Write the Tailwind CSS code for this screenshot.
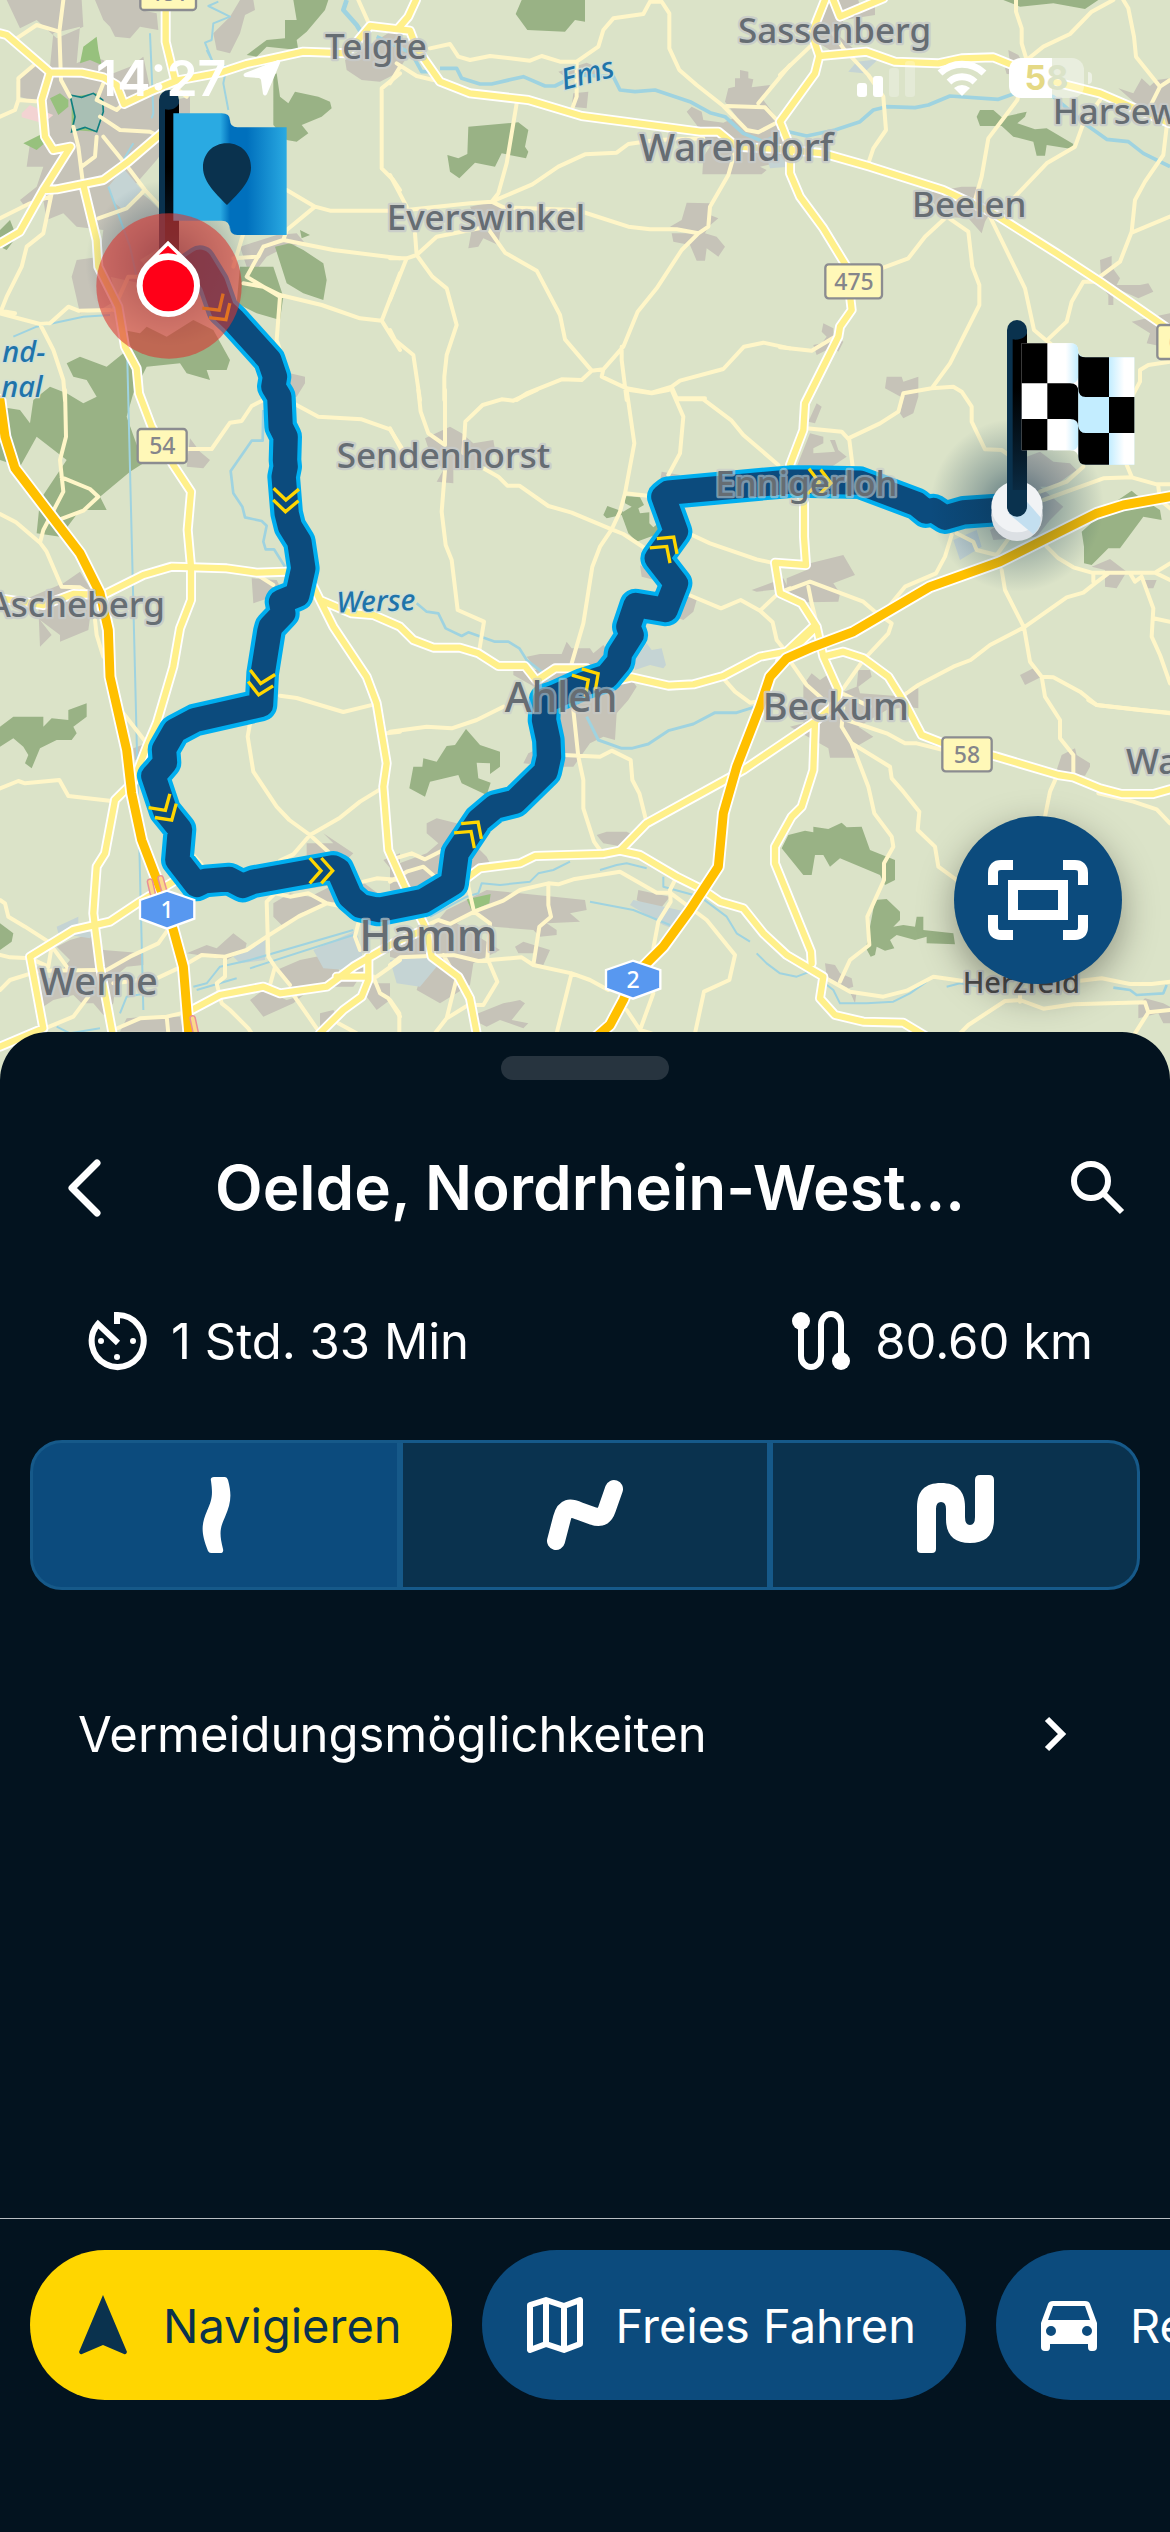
<!DOCTYPE html>
<html lang="de">
<head>
<meta charset="utf-8">
<meta name="viewport" content="width=device-width, initial-scale=1">
<title>Route nach Oelde</title>
<script src="https://cdn.jsdelivr.net/npm/@tailwindcss/browser@4"></script>
</head>
<body class="bg-[#03131f]">
<main class="flex min-h-screen flex-col overflow-hidden bg-[#03131f] font-['Inter',sans-serif] text-white">

<section class="relative" aria-label="Karte">
<svg class="block h-auto w-full" viewBox="0 0 3510 3240" role="img" aria-label="Route von Münster nach Oelde">
<defs>
  <g id="minor">
    <path d="M190 0L178 95L183 240L210 290M50 115L110 75L178 95M150 215L108 190L55 235V300L125 305M55 300L45 330L0 350M250 560L235 440L220 380M245 500L285 470L290 410M300 350L360 390L450 395L480 410M310 410L350 460L390 510L435 570L500 640M295 655L380 625L435 570M0 655L90 610L150 590M155 580L130 700L80 740L65 800L20 890L0 940L120 972L150 970L205 920L235 932L330 930M0 932L45 940M120 972L160 1050L190 1140L195 1200M340 930L385 830H420M510 250L560 290M310 250L290 300L350 330L372 310M1075 0L1110 78M1200 220L1145 265V505L1180 540L1200 570M860 570L945 620L860 690L850 720L790 740L740 830L840 890L830 1020L850 1080M945 620L990 632H1170M850 720L1000 750L1200 775M790 740L775 770L700 775M730 850L790 860L840 885L965 915L1080 955L1145 962L1200 1050M1145 962L1200 820M730 700L700 800"/>
    <path transform="translate(1170)" d="M120 145L180 132L205 170L240 180L300 168L420 182L455 168L510 185H560L625 140L640 90L670 55L760 42L780 5L815 5L838 40V145L868 210L920 255L1000 318L1070 390L1105 397L1165 365L1125 322L1010 318M1105 310L1200 195M560 185V290L545 330M20 190L80 228L130 240M30 200L0 250M380 310L350 490L325 580L305 605L240 610L50 630M305 605L427 553L505 500L585 463L680 458L715 432L800 420L940 415M305 605L340 622L560 630L715 680L780 688H860L925 700L955 680L960 620L1015 525L1035 455M925 700L875 750L800 865L743 935L700 1040L640 1108L605 1112L525 1018L510 945L440 812L345 758L290 680M290 680L140 710L80 765L50 775H0M80 765L75 700M80 765L127 830L170 865L200 975L170 1065L163 1130V1200M50 775L0 900M0 525L50 620M0 990L15 1020L70 1065L90 1200M605 1112L575 1140L515 1138L410 1180L380 1200M640 1108L635 1130L710 1165L785 1178L845 1160L870 1142L1000 1107L1062 1040L1120 1028L1200 1045M695 1040V1080L710 1200M845 1160L860 1195H945"/>
    <path transform="translate(2340)" d="M0 225L90 140M160 100L190 145L265 225L310 290L318 390L280 445L265 490M708 0V35L725 85V130L740 180L790 140L870 102L935 35L1000 0M1030 0L1045 25L1062 110L1068 170L1140 260L1110 320M740 180L712 300L625 415L605 530L585 600M1140 260L1170 240M1160 380L1150 465L1095 545L1065 600L1055 695L1020 785L960 830M1170 650L1055 698M960 300L910 370L885 440L800 490L705 590M310 803L385 775L435 710L500 650L565 695L577 800L598 855V915L510 1090L455 1165L370 1180L355 1235L300 1270L205 1315M455 1165L520 1160L545 1175L575 1220V1265L615 1348L665 1350L700 1375M630 650L735 865L762 990L800 1022L860 965L875 905L910 845H965M0 1042L95 1052L165 1010M800 1022L835 1050M1170 1085L1105 1095L1080 1110V1145L1040 1220L1030 1370L1055 1430"/>
    <path transform="translate(0 1170)" d="M195 0L198 140L180 210L190 305L130 420L120 458L48 397L0 372M120 458L140 485L185 590L240 592L260 605M185 262L270 297L295 320L250 362L180 388M880 40L955 80L1085 88L1170 118L1215 190M565 177H635L690 98L725 93L755 48L795 28M285 690L290 735L310 800M370 970L440 1060M840 917L890 924L1030 966L1120 944M750 1000L743 1040L760 1145L830 1250L868 1290L930 1335L985 1385M1160 1030L1200 1025M1145 1195L1080 1235L1020 1283L930 1335L880 1393L840 1412M780 560L820 585"/>
    <path transform="translate(1170 1170)" d="M85 0L92 65L115 130L165 165V0M0 115L40 190M220 190L226 95L278 45L335 28L370 32L440 0M280 235L325 260L352 287H388L475 348L545 368L665 418L700 432L780 485M710 0L733 160L705 310L690 365L665 418L630 470L607 530L580 700L545 820M165 240L155 365L167 465L185 510L203 660L282 695L268 780M705 310L780 318M720 0L785 10L835 0M845 0L880 80L870 190L835 255M865 28H940L1025 92L1060 135L1165 225M900 432L960 460L1100 508L1155 520M890 612L993 655L1052 630L1110 662L1148 697L1160 750L1180 775M1110 662L1165 610L1200 595M1000 865L1035 905L1080 938L1130 930M0 1025L110 1010L185 1015L260 990L340 950M550 960L565 1100L580 1170V1255L612 1355L630 1380M520 1095L630 1100L665 1082L722 1110L727 1170L748 1210L768 1290"/>
    <path transform="translate(2340 1170)" d="M80 115L185 125L208 150L218 230M790 330L970 265L1055 262L1130 283H1170M780 305L860 275L910 230M530 430L580 455L590 480L650 495L690 440M515 435L495 500L468 550L375 590L330 645M10 605L90 575L250 635L285 665L335 700L325 730L250 810L190 895M85 590L95 640L110 700M665 540L675 600L732 712L750 815L785 860L795 920L840 990V1045L880 1095V1155M732 712L630 765L572 810L520 830L415 885L365 920M732 712L860 622L910 608L945 580L985 550M800 470L835 505L880 532L935 548H1060L1125 548L1170 520M940 550V575M1125 548L1170 570M1050 550L1065 575L1085 560L1120 655L1115 740L1140 795L1170 880M1120 685L1170 695M785 860L820 862L900 905L950 945L1080 960L1170 968M35 820L80 885L125 925L165 960M175 905L270 950M190 950L185 1010L215 1060L265 1190L283 1270L335 1340L340 1370L312 1420V1470L262 1580L268 1665L210 1710L180 1775M215 1060L330 1130L335 1165L370 1205L418 1265L413 1320L465 1370L475 1430L530 1470M200 990L320 1030L375 1060H410L490 1080M830 1160L810 1205L795 1280M955 1210L1060 1235L1130 1258L1170 1300M1135 290L1140 330L1170 355"/>
    <path transform="translate(0 2100)" d="M0 265L55 243L75 250L178 240L205 288L335 303M575 460L610 500M0 600L15 610L25 650L75 680L145 725L200 800M155 740L145 800L90 775L30 772L0 765M0 870L30 840L120 812L290 810M320 810L390 770L475 730L500 695M265 890L220 950L135 985M340 850L470 835L545 800L605 765L675 770L740 750L800 710L895 650L980 610L925 580L870 590L825 580L800 605L805 770L825 800L870 855M825 800L810 855M980 610L1030 620M340 990L420 955L500 950L565 935M500 950L505 1000M675 770V830L650 850L665 910L690 930L745 985L755 1000M870 870L950 985M1075 670L1065 710L1080 750M1090 545L1130 535L1200 540M1120 830L1140 880L1165 895L1200 950M1130 830L1200 780M1015 970L1070 1000"/>
    <path transform="translate(1170 2100)" d="M0 480L65 460L105 478L160 450M0 545L50 515L100 500L140 535M235 490V560L252 635L340 602L390 570L475 550L505 553L550 538L690 515L800 578H840L950 660L1035 765L1018 840L942 875L915 1000M475 550V615L483 650L448 680L430 795M252 635L180 672L145 660L100 680M252 635L300 670L292 775L322 845L280 915H235L170 955L135 1000M0 795L30 772L190 765L265 783L395 772L430 795L545 820L600 840L655 870M160 765L200 835L170 955M545 820L500 1000M855 540L840 570L842 605L805 665L790 745M710 930L750 990L785 1000M790 880L750 990M0 900L28 940V1000"/>
    <path transform="translate(2340 2100)" d="M925 0L950 15L1170 40M130 830L210 875L310 890L380 872L460 830L545 842M900 842L965 835L1050 852H1115L1170 845M540 1000L565 975L675 903L720 900L790 926L880 913L1095 907L1105 937L1065 1000M1105 937L1170 930M720 885V905"/>
  </g>
  <g id="major">
    <path d="M0 100L20 105L150 217L245 218L310 232L350 255L372 312L450 275L530 242L660 218L740 192L910 155L1040 160L1075 120L1110 78L1230 92L1250 145L1320 245L1410 280L1585 300L1745 348L2100 395H2155L2210 440L2340 447L2470 460L2610 500L2830 570L2980 640L3170 760L3300 845L3510 990M1195 85L1225 50L1248 0M150 217L125 300L135 410L160 450L212 440L130 570L60 695L0 730M130 570L170 568L310 540L385 485L490 395M497 0V125L525 240M250 555L290 720L295 800L355 920L375 1040L410 1105L417 1180L455 1280L520 1395L573 1475L563 1590L573 1700V1800L540 1885L520 2000L470 2170L440 2240L400 2345L345 2400L315 2560L290 2600L280 2740L300 2900L345 3140"/>
    <path transform="translate(2340)" d="M135 0L95 100L118 168L105 220L0 365L30 440V520L60 590L130 685L200 800L215 930L180 980L175 1010L75 1210L70 1290L30 1395L72 1510V1610L78 1695L-15 1688L0 1780L65 1810L110 1880L130 1970L175 2070L170 2110L105 2165L-110 2310L-400 2470L-480 2552M118 168L260 155L345 185L475 190L545 175L640 172L820 245L960 280L1170 370M160 0L180 50L310 -5M130 1970L190 1955L250 1975L325 2030L375 2110L425 2205L490 2230L650 2270L835 2325L880 2332L960 2365L1025 2382H1120L1170 2368M110 1880L0 1985M105 2165L100 2310L65 2420L35 2450L-15 2540V2590L93 2855L95 2890"/>
    <path transform="translate(0 1170)" d="M0 625L130 645L220 612L310 615L430 555L515 530L680 535L770 548L860 545M930 570L1000 710L1100 860L1130 940L1160 1120L1150 1190L1165 1380L1210 1480L1280 1620L1295 1700L1375 1760L1410 1825L1430 1930M960 630L1055 670L1120 675L1200 710L1240 750L1300 773H1380L1435 790L1495 828H1575L1610 872L1665 835H1760M1860 870L1895 862L2005 887L2080 883L2170 858L2280 800L2360 785L2440 710"/>
    <path transform="translate(0 2100)" d="M0 1040L130 985L105 850L90 770L220 690L330 665L420 605L520 545M575 930L660 885L790 860L840 880L980 860L1060 800L1180 730L1270 690M960 1000L1030 930L1085 890L1105 840V770M1010 830H1105M1400 535L1440 505L1560 490L1605 468L1810 462L1860 452L1920 465L2030 530L2110 570L2160 605L2230 625L2290 700L2360 765L2470 830L2460 895L2505 945L2590 965L2710 968L2780 1010"/>
  </g>
  <g id="motorway">
    <path d="M0 1200L15 1310L45 1405L240 1660L300 1780L325 1890L330 2030L380 2250L395 2380L425 2520L490 2690L520 2790L550 2900L568 3120"/>
    <path d="M3510 1490L3370 1515L3290 1540L3000 1685L2790 1760L2560 1895L2440 1940L2360 1975L2310 2030L2280 2120L2210 2300L2170 2440L2155 2600L2070 2730L1990 2840L1900 2930L1870 3000L1830 3075L1790 3110"/>
  </g>
  <path id="route" d="M520 840L600 785L640 850L668 930L700 960L808 1080L825 1130L820 1160L838 1190L842 1280L857 1310L855 1380L857 1400L851 1430L860 1540L870 1580L898 1625L910 1705L892 1785L843 1805L850 1840L812 1880L808 1895L788 2020L783 2115L585 2160L524 2192L492 2248L495 2288L472 2315L460 2328L495 2432L540 2488L532 2580L590 2655L615 2643L688 2637L728 2658L760 2645L1000 2602L1015 2610L1050 2690L1082 2718L1135 2730L1270 2703L1358 2650L1370 2560L1437 2460L1485 2420L1545 2405L1637 2315L1647 2270L1645 2220L1632 2160L1635 2100L1665 2090L1750 2052L1820 2030L1857 1985L1860 1960L1895 1905L1885 1880L1907 1815L1997 1830L2028 1750L1970 1675L2028 1595L1990 1490L2005 1478L2370 1445H2430L2580 1448L2750 1512L2778 1535L2800 1530L2835 1553L2890 1537L2990 1530"/>
  <g id="chevrons"><path d="M-52-38L-18 0L-52 38M-17-38L17 0L-17 38"/></g>
  <radialGradient id="shade"><stop offset="0" stop-color="#0a324e" stop-opacity=".65"/><stop offset=".45" stop-color="#0a324e" stop-opacity=".32"/><stop offset="1" stop-color="#0a324e" stop-opacity="0"/></radialGradient>
  <linearGradient id="fold"><stop offset="0" stop-color="#0070bd"/><stop offset=".3" stop-color="#0070bd"/><stop offset="1" stop-color="#2aaae2"/></linearGradient>
  <linearGradient id="edge"><stop offset="0" stop-color="#2aaae2"/><stop offset=".83" stop-color="#2aaae2"/><stop offset="1" stop-color="#0070bd"/></linearGradient>
  <linearGradient id="sheen"><stop offset="0" stop-color="#c3edff"/><stop offset=".6" stop-color="#fff"/></linearGradient>
  <linearGradient id="sheenEnd"><stop offset=".6" stop-color="#fff"/><stop offset="1" stop-color="#c3edff"/></linearGradient>
  <linearGradient id="pole" x1="0" y1="0" x2="0" y2="1"><stop offset="0"/><stop offset=".35" stop-color="#000"/><stop offset="1" stop-color="#0a2a42"/></linearGradient>
</defs>

<rect width="3510" height="3240" fill="#dbe3c8"/>

<!-- built-up areas -->
<g fill="#c6c3b8">
  <path d="M20 0L60 85L110 60L170 115L250 80L245 0ZM285 0L310 60L330 80L345 110L390 115L420 80L475 90L470 40L420 30V0ZM160 100L240 80L230 190L270 170L310 180L340 220L390 200L430 170L450 265L520 300L570 290V340L540 380L470 480L400 560L450 600L500 650V730L420 780L330 820L350 900L300 930L240 940L215 830L230 780L300 770L310 690L230 680L190 640L140 660L130 600L75 620L60 600L110 560L130 500L80 500L90 430L130 420L120 310L60 290L50 240L100 190L150 200ZM640 100L690 50L720 0H760L765 30L735 45L720 100L690 160L650 150ZM1035 180L1180 90L1240 140L1190 220L1140 245L1085 240L1040 210ZM720 740L830 705L890 700L915 730L850 745L800 770L765 815L740 800ZM870 1120L915 1130V1150L890 1190H870ZM330 770L400 760L440 800L420 850L330 830Z"/>
  <path transform="translate(1170)" d="M505 215L590 188L630 205L620 225L530 235ZM550 280L595 275L590 325L545 320ZM240 620L310 605L350 630L330 700L325 735L280 715L265 740L235 745L245 690L260 660ZM890 608L960 610V645L985 655L955 680L945 700L980 710L1005 740L985 770L950 745L945 782H920L900 735L850 725L845 700L925 700L840 680L875 660ZM1005 305L1015 265L1035 260L1035 235H1050V210L1075 215V235L1090 238L1085 262L1140 255L1120 300L1180 380L1200 480L1110 500L1130 510L1115 523H937L940 470L960 440L920 375L890 335L905 320L935 335L940 360L1000 368L1040 350Z"/>
  <path transform="translate(2340)" d="M100 120L150 0H235L240 20L285 15V45L190 60L180 110L225 150L150 150ZM685 150L715 165L735 200V225L680 222L675 205L690 190ZM1015 265L1060 280L1085 235L1110 258L1130 240L1170 235V385L1100 340ZM440 580L545 560H590V600L640 620L615 665L605 700L565 655L490 650ZM960 780L995 768V800L1020 835L1010 855H1080L1105 850L1120 875L1075 895L1020 870L1000 880V915H985V885L965 860ZM130 970L160 985V1005L190 1025L175 1055L160 1040L110 1065L100 1035L125 1030L140 1010L125 995ZM1055 965L1120 950L1170 940V1045L1100 1030L1110 1000ZM320 1130H365L370 1145L415 1130V1190L400 1240L370 1255L360 1240L370 1195L315 1165ZM110 1210L125 1220L105 1270L85 1265ZM90 1300L130 1310V1330L100 1345V1360L165 1355L150 1320H165L175 1350L200 1370L155 1400L120 1430L50 1400ZM740 1370L780 1355L820 1385L870 1390L890 1410L820 1460L780 1460L850 1520L810 1560L770 1610L640 1620L630 1590L720 1540ZM20 1735L80 1710L90 1690L190 1665L225 1725L160 1750L180 1780L175 1805L80 1807L20 1780ZM935 1700L990 1677L1040 1715L1010 1765L975 1760V1710ZM1085 1740H1130L1120 1765H1095ZM720 2025L760 2005L785 2030L735 2055ZM70 2055L95 2020L120 2040L150 2020L180 2080L230 2060L235 2010L270 2010L275 2030L235 2060L240 2080L380 2090V2070L415 2065V2125L380 2120L320 2130L235 2180L280 2210L220 2245L225 2273H150L145 2245L30 2180L70 2170ZM845 2265L885 2245L890 2265L930 2290V2300L915 2327L880 2322L830 2310ZM135 2890L165 2895L180 2920L215 2935L220 2960L190 2970L230 2975L225 3010L205 2965L140 2930ZM1075 3015L1095 2995L1150 3010L1170 3020V3070H1150L1135 3040L1075 3055Z"/>
  <path d="M570 1315L600 1355L630 1380L610 1405L560 1400ZM190 1750L240 1715L280 1780L265 1890L180 1925V1905L120 1860L155 1905L120 1940L115 1820L70 1800ZM755 1735L830 1740L850 1780L760 1810ZM400 2245L440 2230V2280L405 2280ZM210 2820L280 2800L310 2850L430 2860V2895L380 2900L350 2925L340 3010L310 3045L280 3010H245L220 2985L160 3000L130 3020L120 2940L170 2930L210 2880L170 2840ZM560 2860L620 2835L650 2845L700 2800L740 2830L735 2850L680 2880L630 2870ZM380 3055L440 3050H540L550 3095H360ZM750 3000L790 2970L860 3000L910 2985L880 3010L790 3050ZM920 2530L1000 2530L970 2500L1060 2560L1030 2590L1080 2640L1160 2700L1080 2700L1030 2650L900 2670L920 2620ZM820 2710L870 2680L930 2690L1010 2650L1020 2700L900 2740L850 2780L820 2750ZM830 2910L900 2880L1000 2860L1020 2920L1100 2900L1060 2960L870 2960ZM1150 2580L1200 2560V2640ZM960 3040L1000 3030L1020 3060L990 3090H960ZM1105 2950L1170 2950V3000L1130 3030L1100 2990Z"/>
  <path transform="translate(1170 1170)" d="M105 145L180 110L215 130L250 160L310 150L315 180L280 240L190 240V280L140 275L160 240L120 190ZM815 245L870 255L860 280L810 275ZM750 525L800 560L815 575L755 560ZM885 610L920 630L910 665L880 690L855 680ZM1085 600L1180 565L1195 595L1100 605ZM410 800L450 792H515L530 755L545 775H600L610 790L640 765L720 860L740 890L715 930L680 970L675 1050L640 1040L600 1060L550 1130H500L400 1120L415 1090L480 1060L450 900L370 855L370 840L440 840ZM110 1300L140 1285L200 1300L240 1350L290 1400L310 1440L240 1450L220 1500L110 1530L0 1500V1430L110 1390L145 1360L110 1330ZM620 1335L650 1325L710 1325L740 1340L700 1370L640 1360ZM170 1560L290 1500L390 1510L585 1530L590 1560L540 1570L570 1595L470 1600L500 1620V1635L450 1640L430 1620L310 1610L250 1570L200 1600L330 1680L250 1720L240 1785L150 1840L80 1800L100 1730L0 1700L0 1650L120 1620ZM375 1670L400 1655L480 1680L460 1725L430 1720L440 1690L385 1690ZM745 1500L790 1510L840 1520L800 1570L740 1530ZM265 1870L340 1840L390 1830L405 1840L365 1890L415 1900L400 1915L330 1890L290 1910L250 1890Z"/>
</g>

<!-- woodland -->
<g fill="#99b285">
  <path d="M880 0H985L975 30L920 95L890 120L895 150L800 140L770 170L740 165L800 120L855 115V60H890ZM820 225L830 220L840 290L865 310L885 275L955 290L990 305L995 325L965 350L905 375L925 400L890 425L860 420L820 375ZM825 740L870 730L910 750L970 790L980 840L970 900L910 880L860 850ZM720 800L820 800L830 830L850 890L840 960L770 940L710 910ZM900 690L930 705L905 715ZM200 1090L240 1070L320 1100L370 1060L370 990L420 1000L440 980L500 1010L580 960L640 990L690 1080L680 1110L620 1110L630 1140L560 1120L540 1090L440 1100L400 1180L380 1250L430 1390L390 1415L300 1490L320 1530L240 1530L180 1610L110 1600L120 1500L200 1380L110 1310L60 1400L0 1380V1220L60 1230L90 1270L100 1200L150 1160L200 1180L250 1210L290 1190L260 1140L220 1130ZM0 2180L40 2150H130V2180L155 2155L205 2160V2130L260 2110V2150L220 2180L230 2200L215 2220L170 2220L120 2245L95 2305L75 2290L85 2265L70 2240L40 2215L0 2240ZM0 2770L40 2800L35 2825L0 2850ZM30 660L50 710L20 750L0 740V690Z"/>
  <path transform="translate(1170)" d="M395 0H585V65L555 60L525 95L412 90L377 42ZM235 380L385 367L415 390L405 440L415 455L408 475L335 460L315 500L255 488L208 535L180 515L172 465L205 475L232 462Z"/>
  <path transform="translate(2340)" d="M670 0H955L915 27L820 10L720 20ZM600 330H640L665 352L740 335L735 350L712 370L765 388L800 385L880 432L875 447L800 435L795 467H770L760 425L700 410L665 378H600L590 350ZM905 1595L1000 1510L1055 1472L1070 1485L1140 1530L1145 1560L1090 1550L1020 1645L985 1645L935 1695L912 1690V1640ZM5 2545L25 2505L75 2492L100 2497V2480L145 2487L185 2468L200 2482L245 2480L270 2550L345 2580V2640L315 2655L300 2625L180 2575L150 2600L130 2565H105L95 2625H70ZM285 2700L320 2697L360 2735V2760L340 2780L370 2775L405 2780L410 2750H430V2790L520 2800L525 2833L440 2830V2810L405 2820L350 2805L330 2820L343 2845L315 2852L290 2840L285 2865L272 2870L258 2845Z"/>
  <path transform="translate(1170 1170)" d="M705 318L750 322L762 345L745 355L750 370L778 367V400L790 412L805 400L810 430L740 455L715 430L695 375L650 385L640 375L652 348L700 365L725 350L705 340ZM228 1017L270 1065L330 1085V1130L300 1152V1120L260 1118L265 1165L302 1178L290 1215L215 1180L205 1155L120 1175L105 1220L58 1195L70 1130H97L100 1105L140 1115L170 1068L195 1065Z"/>
</g>
<g fill="#97c17d">
  <path d="M250 140L290 110L295 150L305 195L270 180L240 190ZM150 295L180 280L205 300V320L175 345ZM70 430L130 400L145 420L110 450ZM215 290L290 280L310 330L290 395L215 390Z"/>
  <path transform="translate(1170 2100)" d="M230 598L302 582L298 610L245 632Z"/>
</g>
<path d="M65 340L90 315L120 330L160 345L130 370L65 352Z" fill="#f3d3d2"/>
<path d="M210 285L245 292L280 280L308 300L310 335L290 395L255 382L215 395L225 350Z" fill="#a9bfb4" stroke="#0f8080" stroke-width="5"/>

<!-- water -->
<g fill="#c5d4d4">
  <path d="M325 560L370 505L425 570L370 630L345 610ZM170 2780L235 2750V2780L280 2800L270 2815L175 2800ZM940 2850L1070 2790L1090 2880L1040 2910L970 2905ZM700 2870L795 2820V2880L720 2890ZM1170 2880L1290 2870L1310 2900L1260 2960L1190 2950ZM2300 470L2370 460V500L2310 505ZM2545 215L2570 185L2635 178L2590 220ZM1890 2715L1900 2700L2080 2740L2030 2790L1990 2775ZM1905 1980L1940 1930L1955 1950L1985 1945L1998 1995L1990 2005L1950 1995L1905 2010ZM2860 1620L2930 1590L2945 1640L2880 1680Z"/>
</g>
<g fill="none" stroke="#9fd3e0" stroke-width="11" stroke-linejoin="round">
  <path d="M1130 110L1235 160L1265 215H1310M1320 205H1370L1385 235L1440 252H1475L1570 230L1635 258H1665L1730 225L1840 230L1860 270L1905 275L1965 270L2070 305L2130 338L2175 350L2230 400L2290 425L2365 395L2420 408L2505 390L2580 365L2620 330L2660 320L2745 323L2785 315L2850 288L2995 298L3060 275L3160 290L3260 375L3320 418L3385 425L3430 460L3510 500"/>
  <path d="M1040 0L1030 30L1070 75L1110 140" stroke-width="14"/>
  <path d="M655 5L625 18L690 50L640 70L635 120L615 128L640 190L680 200L670 250L685 330M640 190L620 150M450 100L460 340L455 355" stroke-width="6"/>
  <path d="M325 560L390 740L410 830M400 430L340 530M40 1010L110 980L250 950L330 945" stroke-width="6"/>
  <path d="M790 1230L788 1322H755L692 1413L700 1480L727 1520L735 1552L785 1563L800 1577L790 1625L797 1648H822L855 1700M1250 1810L1280 1835L1315 1840L1337 1885L1385 1908L1405 1897L1485 1925H1525L1558 1945L1580 1980L1625 2015L1655 2050" stroke-width="8"/>
  <path d="M1760 2150L1795 2220L1865 2245H1895L1945 2232L2005 2192L2080 2172L2145 2138H2210L2260 2122" stroke-width="9"/>
  <path d="M170 3080L210 3100L300 3085M360 3040L380 2990L440 2980M580 2960L620 2950L640 2925L660 2900L750 2880L1060 2790M750 2905L1060 2805M590 2970L710 2935M1290 2750L1400 2690L1435 2680L1445 2650L1500 2655L1590 2645L1615 2620L1660 2610L1710 2585M1800 2610L1850 2595L1880 2590L1940 2605M1990 2630V2660L2100 2690L2180 2750L2210 2800L2250 2825M1770 2705L1900 2730L2010 2775M2270 2860L2300 2890L2340 2920L2390 2930L2430 2915L2500 2970L2520 3010L2600 3010L2680 3005L2730 2980L2780 2945M2840 2960L2880 2950L2940 2960M380 1000L430 3030" stroke-width="6"/>
  <path d="M3340 2963L3390 2970L3410 2985L3490 2980L3500 2955" stroke-width="8"/>
</g>

<!-- road network -->
<g fill="none" stroke-linejoin="round" stroke-linecap="round">
  <use href="#minor" stroke="#fff6c8" stroke-width="12"/>
  <use href="#major" stroke="#fff" stroke-width="30"/>
  <use href="#major" stroke="#fff08a" stroke-width="19"/>
  <use href="#motorway" stroke="#fff" stroke-width="38"/>
  <use href="#motorway" stroke="#ffc000" stroke-width="27"/>
  <path d="M458 2680L450 2645M492 2670L482 2635M592 3120L578 3055" stroke="#e88f98" stroke-width="20"/>
  <path d="M458 2680L450 2645M492 2670L482 2635M592 3120L578 3055" stroke="#fbd989" stroke-width="11"/>
  <use href="#route" stroke="#00aeef" stroke-width="98"/>
  <use href="#route" stroke="#0c4b7d" stroke-width="73"/>
</g>
<g fill="none" stroke="#ffd600" stroke-width="10">
  <use href="#chevrons" transform="translate(668 945) rotate(55)"/>
  <use href="#chevrons" transform="translate(857 1518) rotate(92)"/>
  <use href="#chevrons" transform="translate(779 2068) rotate(100)"/>
  <use href="#chevrons" transform="translate(506 2446) rotate(57)"/>
  <use href="#chevrons" transform="translate(981 2612)"/>
  <use href="#chevrons" transform="translate(1424 2480) rotate(-53)"/>
  <use href="#chevrons" transform="translate(1780 2030) rotate(-32)"/>
  <use href="#chevrons" transform="translate(2011 1625) rotate(-53)"/>
  <use href="#chevrons" transform="translate(2476 1448) rotate(4)"/>
</g>

<!-- road numbers -->
<g fill="#fff8b8" stroke="#8b8c90" stroke-width="7">
  <rect x="421" y="-72" width="167" height="102" rx="10"/>
  <rect x="2476" y="793" width="170" height="102" rx="10"/>
  <rect x="3472" y="975" width="150" height="102" rx="10"/>
  <rect x="413" y="1287" width="147" height="102" rx="10"/>
  <rect x="2827" y="2212" width="148" height="102" rx="10"/>
</g>
<g fill="#5898f0" stroke="#fff" stroke-width="7">
  <path d="M420 2700L501 2672L583 2700V2756L501 2786L420 2756Z"/>
  <path d="M1818 2910L1899 2882L1981 2910V2966L1899 2996L1818 2966Z"/>
</g>
<g font-family="'Noto Sans',sans-serif" font-size="69" font-weight="500" fill="#85868b" text-anchor="middle">
  <text x="505" y="4">481</text><text x="2562" y="869">475</text><text x="3546" y="1051">64</text>
  <text x="487" y="1362">54</text><text x="2901" y="2288">58</text>
  <g fill="#fff"><text x="501" y="2755">1</text><text x="1899" y="2965">2</text></g>
</g>

<!-- place names -->
<g font-family="'Noto Sans',sans-serif" font-weight="500" fill="#666d73" stroke="#c8cbca" stroke-opacity=".85" stroke-width="14" stroke-linejoin="round" paint-order="stroke">
  <g font-size="105">
    <text x="975" y="178">Telgte</text><text x="2214" y="130">Sassenberg</text>
    <text x="3158" y="373">Harsewinkel</text><text x="2736" y="652">Beelen</text>
    <text x="1160" y="690">Everswinkel</text><text x="1010" y="1405">Sendenhorst</text>
    <text x="495" y="1850" text-anchor="end">Ascheberg</text><text x="2146" y="1488" stroke-opacity=".6">Ennigerloh</text>
    <text x="3378" y="2322">Wadersloh</text>
  </g>
  <g font-size="114">
    <text x="1918" y="483">Warendorf</text><text x="2288" y="2160">Beckum</text><text x="118" y="2986">Werne</text>
  </g>
  <text x="1514" y="2135" font-size="123" stroke-opacity=".6">Ahlen</text>
  <text x="1078" y="2852" font-size="129" stroke-opacity=".7">Hamm</text>
  <text x="2888" y="2980" font-size="87" fill="#4c4c4c">Herzfeld</text>
</g>
<g font-family="'Noto Sans',sans-serif" font-style="italic" font-weight="500" font-size="87" fill="#1f74aa" stroke="#cfe0d8" stroke-width="8" paint-order="stroke">
  <text transform="translate(1692 270) rotate(-15)">Ems</text>
  <text transform="translate(1010 1838) rotate(-2)">Werse</text>
  <text x="136" y="1086" text-anchor="end">nd-</text><text x="128" y="1192" text-anchor="end">nal</text>
</g>

<!-- start flag -->
<circle cx="506" cy="790" r="250" fill="url(#shade)"/>
<path d="M477 300A30 30 0 0 1 537 300V860H477Z" fill="#0a324e"/>
<path d="M495 328C515 332 530 325 537 310V860H495Z" fill="url(#pole)"/>
<path d="M520 340H665Q690 340 690 362V690Q690 662 665 662H520Z" fill="url(#edge)"/>
<path d="M690 360Q690 382 712 382H860V705H712Q690 705 690 682Z" fill="url(#fold)"/>
<path d="M681 430C725 430 753 462 753 503C753 548 705 590 681 615C657 590 609 548 609 503C609 462 637 430 681 430Z" fill="#0a324e"/>
<!-- current position -->
<circle cx="507" cy="858" r="218" fill="#d93732" fill-opacity=".6"/>
<path d="M504 722L575 792A95 95 0 1 1 435 792Z" fill="#fff"/>
<path d="M504 737L532 764Q504 755 476 764Z" fill="#ff0018"/>
<circle cx="505" cy="857" r="77" fill="#ff0018"/>

<!-- finish flag -->
<circle cx="3051" cy="1515" r="260" fill="url(#shade)"/>
<circle cx="3051" cy="1546" r="77" fill="#dce0e4"/>
<circle cx="3051" cy="1520" r="77" fill="#f1f3f5"/>
<path d="M3025 1540L3100 1603Q3128 1575 3120 1550L3081 1505Z" fill="#c3dff0"/>
<path d="M3021 990A30 30 0 0 1 3081 990V1520A30 30 0 0 1 3021 1520Z" fill="#0a324e"/>
<path d="M3038 1018C3060 1022 3076 1012 3081 1000V1470H3038Z" fill="url(#pole)"/>
<path d="M3065 1030H3210Q3235 1030 3235 1055V1375Q3235 1351 3210 1351H3065Z" fill="#fff"/>
<rect x="3142" y="1030" width="92" height="120" rx="18" fill="url(#sheenEnd)"/>
<rect x="3142" y="1257" width="92" height="94" rx="18" fill="url(#sheenEnd)"/>
<path d="M3065 1030H3142V1150H3065ZM3142 1150H3210Q3235 1150 3235 1175V1280Q3235 1257 3210 1257H3142ZM3065 1257H3142V1351H3065Z"/>
<path d="M3235 1050Q3235 1072 3257 1072H3403V1394H3257Q3235 1394 3235 1370Z" fill="#c3edff"/>
<rect x="3327" y="1072" width="76" height="119" fill="url(#sheen)"/>
<rect x="3327" y="1299" width="76" height="95" fill="url(#sheen)"/>
<path d="M3235 1060Q3237 1072 3257 1072H3327V1191H3257Q3235 1191 3235 1165ZM3327 1191H3403V1299H3327ZM3235 1277Q3237 1299 3257 1299H3327V1394H3257Q3235 1394 3235 1370Z"/>
</svg>

<header class="absolute inset-x-0 top-12 flex h-15 items-center justify-between pr-[78px] pl-24">
  <div class="flex items-center gap-4">
    <time class="text-[50px] leading-none font-semibold">14:27</time>
    <svg class="h-9 w-10" viewBox="0 0 40 36" fill="#fff" aria-hidden="true"><path d="M36 0Q39 0 38 3L25 34Q23 37 21 34L19 20Q19 19 17 18L3 17Q0 15 3 13Z"/></svg>
  </div>
  <div class="flex items-center gap-[22px]">
    <svg class="h-10 w-[58px]" viewBox="0 0 58 40" fill="#fff" aria-hidden="true"><rect y="25" width="10" height="14" rx="3"/><rect x="16" y="18" width="10" height="21" rx="3"/><rect x="32" y="10" width="10" height="29" rx="3" opacity=".25"/><rect x="48" y="3" width="10" height="36" rx="3" opacity=".25"/></svg>
    <svg class="h-9 w-[50px]" viewBox="0 0 50 36" fill="none" stroke="#fff" stroke-width="7" aria-hidden="true"><path d="M3 13A32 32 0 0 1 47 13M12 22A19 19 0 0 1 38 22"/><path d="M25 36L17 28Q25 22 33 28Z" fill="#fff" stroke="none"/></svg>
    <div class="flex items-center gap-1">
      <div class="flex h-10 w-[75px] items-center justify-center overflow-hidden rounded-xl bg-linear-to-r from-white from-57% to-white/40 to-57% text-[34px] leading-none font-bold"><span class="text-[#e5d985]">5</span><span class="text-[#dbe3c8]">8</span></div>
      <span class="h-3 w-1 rounded-r-full bg-white/50"></span>
    </div>
  </div>
</header>

<button class="absolute right-12 bottom-24 flex size-42 items-center justify-center rounded-full bg-[#0c4b7d] shadow-[0_12px_36px_rgba(0,0,0,0.35)]" aria-label="Route einpassen">
  <svg class="h-20 w-25" viewBox="0 0 100 80" fill="none" stroke="#fff" stroke-width="10" aria-hidden="true"><path d="M5 25V13Q5 5 13 5H25M75 5H87Q95 5 95 13V25M95 55V67Q95 75 87 75H75M25 75H13Q5 75 5 67V55"/><rect x="25" y="25" width="50" height="30"/></svg>
</button>
</section>

<section class="relative -mt-12 flex flex-1 flex-col rounded-t-[48px] bg-[#03131f] pt-6">
  <div class="mx-auto h-6 w-42 rounded-full bg-[#27343f]"></div>

  <div class="mt-15 flex h-24 items-center justify-between pr-10 pl-[54px]">
    <button class="flex size-15 items-center justify-center" aria-label="Zurück"><svg class="h-[58px] w-9" viewBox="0 0 36 58" fill="none" stroke="#fff" stroke-width="7" stroke-linecap="round" stroke-linejoin="round" aria-hidden="true"><path d="M31 4L6 29L31 54"/></svg></button>
    <h1 class="text-[62px] leading-none font-semibold whitespace-nowrap">Oelde, Nordrhein-West...</h1>
    <button class="flex size-16 items-center justify-center" aria-label="Suchen"><svg class="size-[54px]" viewBox="0 0 54 54" fill="none" stroke="#fff" stroke-width="6" aria-hidden="true"><circle cx="20" cy="20" r="17"/><path d="M32 32L51 51"/></svg></button>
  </div>

  <div class="mt-[75px] flex h-15 items-center justify-between pr-[77px] pl-[87px] text-[49px] leading-none">
    <p class="flex items-center gap-6">
      <svg class="size-15" viewBox="0 0 60 60" fill="none" stroke="#fff" stroke-width="6" aria-hidden="true"><path d="M30 13V4A26 26 0 1 1 11 13L31 32"/><g fill="#fff" stroke="none"><circle cx="14" cy="30" r="3"/><circle cx="46" cy="30" r="3"/><circle cx="30" cy="46" r="3"/></g></svg>
      <span>1 Std. 33 Min</span>
    </p>
    <p class="flex items-center gap-6">
      <svg class="size-15" viewBox="0 0 60 60" fill="none" stroke="#fff" stroke-width="6" aria-hidden="true"><path d="M10 10V45A10 11 0 0 0 30 45V14A10 11 0 0 1 50 14V50"/><g fill="#fff" stroke="none"><circle cx="10" cy="10" r="9"/><circle cx="50" cy="50" r="9"/></g></svg>
      <span>80.60 km</span>
    </p>
  </div>

  <div class="mx-[30px] mt-[69px] grid h-[150px] grid-cols-3 gap-1.5 overflow-hidden rounded-[32px] border-[3px] border-[#165989] bg-[#165989]">
    <button class="flex items-center justify-center bg-[#0c4b7d]" aria-label="Wenig kurvig"><svg class="size-20" viewBox="0 0 80 80" fill="#fff" aria-hidden="true"><path d="M39 2H50Q52 2 53 5C57 20 56 28 50 42C45 53 44 58 48 74Q49 78 45 78H36Q34 78 33 76C26 58 26 50 32 36C37 25 38 20 36 6Q35 2 39 2Z"/></svg></button>
    <button class="flex items-center justify-center bg-[#0a324e]" aria-label="Kurvig"><svg class="size-20" viewBox="0 0 80 80" fill="none" stroke="#fff" stroke-width="18" stroke-linecap="round" aria-hidden="true"><path d="M11 66L17 43C20 32 25 32 34 36L48 41C57 44 60 40 62 34L69 14"/></svg></button>
    <button class="flex items-center justify-center bg-[#0a324e]" aria-label="Sehr kurvig"><svg class="size-20" viewBox="0 0 80 80" fill="#fff" aria-hidden="true"><path d="M2 74V32C2 16 10 8 26 8C42 8 50 16 50 32V42Q50 50 55 50Q60 50 60 42V5Q60 0 65 0H74Q79 0 79 5V44C79 60 71 68 55 68C39 68 31 60 31 44V34Q31 27 26 27Q21 27 21 34V74Q21 78 17 78H6Q2 78 2 74Z"/></svg></button>
  </div>

  <a href="#vermeidung" class="mx-[78px] mt-24 flex h-24 items-center justify-between pr-6 text-[49px] leading-none">
    <span>Vermeidungsmöglichkeiten</span>
    <svg class="h-9 w-6" viewBox="0 0 24 36" fill="none" stroke="#fff" stroke-width="6" aria-hidden="true"><path d="M3 3L18 18L3 33"/></svg>
  </a>

  <nav class="mt-auto flex gap-[30px] overflow-hidden border-t border-[#b9bec2] px-[30px] pt-[31px] pb-[132px] text-[47px] leading-none whitespace-nowrap">
    <button class="flex h-[150px] shrink-0 items-center gap-9 rounded-full bg-[#ffd600] pr-[50px] pl-[49px] text-[#0a324e]"><svg class="h-[60px] w-12" viewBox="0 0 48 60" fill="currentColor" aria-hidden="true"><path d="M24 0L48 57Q47 60 45 59L24 50L3 59Q1 60 0 57Z"/></svg>Navigieren</button>
    <button class="flex h-[150px] shrink-0 items-center gap-8 rounded-full bg-[#0c4b7d] pr-[50px] pl-11"><svg class="size-[58px]" viewBox="0 0 58 58" fill="none" stroke="#fff" stroke-width="6" stroke-linejoin="round" aria-hidden="true"><path d="M4 9L20 4L38 10L54 4V48L38 54L20 48L4 54ZM20 4V48M38 10V54"/></svg>Freies Fahren</button>
    <button class="flex h-[150px] shrink-0 items-center gap-8 rounded-full bg-[#0c4b7d] pr-[50px] pl-11"><svg class="size-[58px]" viewBox="0 0 58 58" fill="#fff" fill-rule="evenodd" aria-hidden="true"><path d="M8 8Q9 5 13 5H45Q49 5 50 8L57 27V51Q57 55 53 55H51Q48 55 48 51V48H10V51Q10 55 7 55H5Q1 55 1 51V27ZM13 10L8 24H50L45 10ZM11 30A5 5 0 1 0 11 40A5 5 0 1 0 11 30M47 30A5 5 0 1 0 47 40A5 5 0 1 0 47 30"/></svg>Reisen</button>
  </nav>
</section>
</main>
</body>
</html>
